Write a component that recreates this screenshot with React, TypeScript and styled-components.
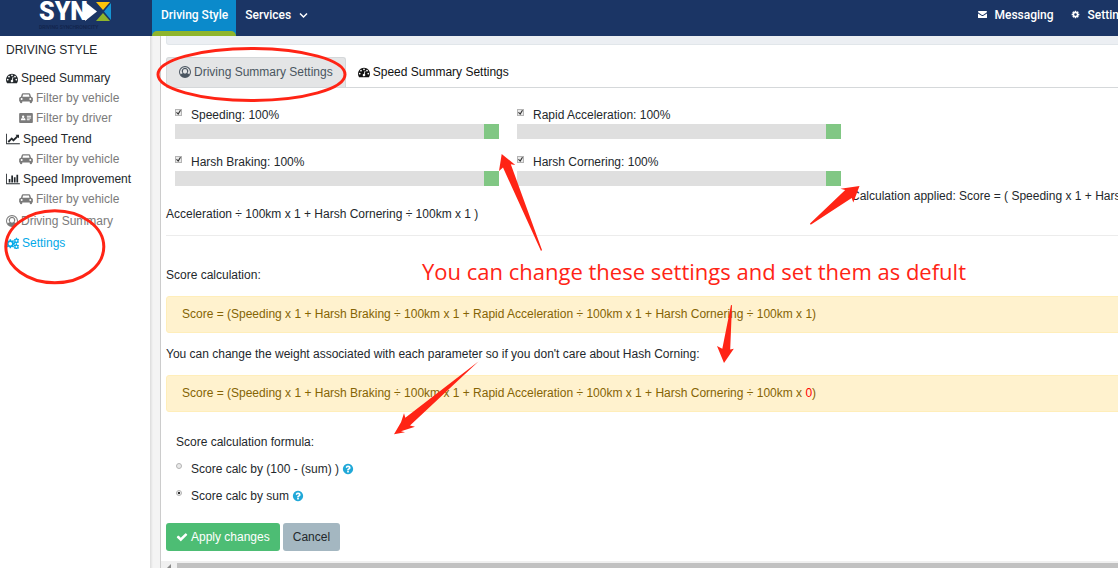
import React, { useState } from "react";
import styled, { createGlobalStyle } from "styled-components";

const Global = createGlobalStyle`
  * { box-sizing: border-box; }
  html, body { height: 100%; }
  body {
    margin: 0;
    overflow: hidden;
    background: #fff;
    color: #23282c;
    font: 12px/18px "Liberation Sans", Arial, sans-serif;
  }
  #root { height: 100%; }
  ul { margin: 0; padding: 0; list-style: none; }
`;

/* ---------- icons ---------- */

const ICONS = {
  gauge: { w: 1792, d: "M384 1152q0-53-37.5-90.5t-90.5-37.5-90.5 37.5-37.5 90.5 37.5 90.5 90.5 37.5 90.5-37.5 37.5-90.5zm192-448q0-53-37.5-90.5t-90.5-37.5-90.5 37.5-37.5 90.5 37.5 90.5 90.5 37.5 90.5-37.5 37.5-90.5zm428 481l101-382q6-26-7.5-48.5t-38.5-29.5-48 6.5-30 39.5l-101 382q-60 5-107 43.5t-63 98.5q-20 77 20 146t117 89 146-20 89-117q16-60-6-117t-72-91zm660-33q0-53-37.5-90.5t-90.5-37.5-90.5 37.5-37.5 90.5 37.5 90.5 90.5 37.5 90.5-37.5 37.5-90.5zm-640-640q0-53-37.5-90.5t-90.5-37.5-90.5 37.5-37.5 90.5 37.5 90.5 90.5 37.5 90.5-37.5 37.5-90.5zm448 192q0-53-37.5-90.5t-90.5-37.5-90.5 37.5-37.5 90.5 37.5 90.5 90.5 37.5 90.5-37.5 37.5-90.5zm320 448q0 261-141 483-19 29-54 29h-1402q-35 0-54-29-141-221-141-483 0-182 71-348t191-286 286-191 348-71 348 71 286 191 191 286 71 348z" },
  cog: { w: 1792, d: "M1152 896q0-106-75-181t-181-75-181 75-75 181 75 181 181 75 181-75 75-181zm512-109v222q0 12-8 23t-20 13l-185 28q-19 54-39 91 35 50 107 138 10 12 10 25t-9 23q-27 37-99 108t-94 71q-12 0-26-9l-138-108q-44 23-91 38-16 136-29 186-7 28-36 28h-222q-14 0-24.5-8.5t-11.5-21.5l-28-184q-49-16-90-37l-141 107q-10 9-25 9-14 0-25-11-126-114-165-168-7-10-7-23 0-12 8-23 15-21 51-66.5t54-70.5q-27-50-41-99l-183-27q-13-2-21-12.5t-8-23.5v-222q0-12 8-23t19-13l186-28q14-46 39-92-40-57-107-138-10-12-10-24 0-10 9-23 26-36 98.5-107.5t94.5-71.5q13 0 26 10l138 107q44-23 91-38 16-136 29-186 7-28 36-28h222q14 0 24.5 8.5t11.5 21.5l28 184q49 16 90 37l142-107q9-9 24-9 13 0 25 10 129 119 165 170 7 8 7 22 0 12-8 23-15 21-51 66.5t-54 70.5q26 50 41 98l183 28q13 2 21 12.5t8 23.5z" },
  check: { w: 1792, d: "M1671 566q0 40-28 68l-724 724-136 136q-28 28-68 28t-68-28l-136-136-362-362q-28-28-28-68t28-68l136-136q28-28 68-28t68 28l294 295 656-657q28-28 68-28t68 28l136 136q28 28 28 68z" },
  line: { w: 2048, d: "M2048 1536v128h-2048v-1536h128v1408h1920zm-128-1248v435q0 21-19.5 29.5t-35.5-7.5l-121-121-633 633q-10 10-23 10t-23-10l-233-233-416 416-192-192 585-585q10-10 23-10t23 10l233 233 464-464-121-121q-16-16-7.5-35.5t29.5-19.5h435q14 0 23 9t9 23z" },
  bars: { w: 2048, d: "M640 896v512h-256v-512h256zm384-512v1024h-256v-1024h256zm1024 1152v128h-2048v-1536h128v1408h1920zm-640-896v768h-256v-768h256zm384-384v1152h-256v-1152h256z" },
  help: { w: 1792, d: "M1024 1376v-192q0-14-9-23t-23-9h-192q-14 0-23 9t-9 23v192q0 14 9 23t23 9h192q14 0 23-9t9-23zm256-672q0-88-55.5-163t-138.5-116-170-41q-243 0-371 213-15 24 8 42l132 100q7 6 19 6 16 0 25-12 53-68 86-92 34-24 86-24 48 0 85.5 26t37.5 59q0 38-20 61t-68 45q-63 28-115.5 86.5t-52.5 125.5v36q0 14 9 23t23 9h192q14 0 23-9t9-23q0-19 21.5-49.5t54.5-49.5q32-18 49-28.5t46-35 44.5-48 28-60.5 12.5-81zm384 192q0 209-103 385.5t-279.5 279.5-385.5 103-385.5-103-279.5-279.5-103-385.5 103-385.5 279.5-279.5 385.5-103 385.5 103 279.5 279.5 103 385.5z" },
  user: { w: 1792, d: "M896 0a896 896 0 1 0 0 1792a896 896 0 1 0 0-1792zM896 150a746 746 0 0 1 640 1128c-60-110-150-178-290-198a470 470 0 1 0-700 0c-140 20-230 88-290 198a746 746 0 0 1 640-1128zM896 440a310 310 0 0 0-310 330c0 200 130 350 310 350s310-150 310-350a310 310 0 0 0-310-330z" },
  car: { w: 2048, d: "M270 704L400 300q38-130 170-130h908q132 0 170 130l130 404q190 20 270 210v450q0 44-44 44h-84v110a170 170 0 0 1-340 0v-110H468v110a170 170 0 0 1-340 0v-110H44q-44 0-44-44V914q80-190 270-210zM500 704h1048l-96-316q-8-24-30-24H626q-22 0-30 24zM380 910a146 146 0 1 0 0 292a146 146 0 1 0 0-292zM1668 910a146 146 0 1 0 0 292a146 146 0 1 0 0-292z" },
  card: { w: 2048, d: "M140 160h1768q140 0 140 140v1192q0 140-140 140H140Q0 1632 0 1492V300q0-140 140-140zM600 520a180 180 0 1 0 0 360a180 180 0 1 0 0-360zM256 1240h700q0-300-190-330q-160 110-330 0q-180 30-180 330zM1152 576v128h640V576zM1152 832v128h640V832zM1152 1088v128h420v-128z" },
  mail: { w: 1792, d: "M0 330q0-120 140-120h1512q140 0 140 120q0 130-150 230L1000 980q-104 72-208 0L150 560Q0 460 0 330zM0 680l720 470q176 120 352 0l720-470v790q0 130-140 130H140Q0 1600 0 1470z" },
  cogs: { w: 2048, d: "M570 300h220l34 190 130 56 160-110 150 150-110 160 56 130 190 34v210l-190 34-56 130 110 160-150 150-160-110-130 56-34 190H570l-34-190-130-56-160 110L96 1444l110-160-56-130-150-34V910l150-34 56-130L96 586l150-150 160 110 130-56zM680 740a276 276 0 1 0 0 552a276 276 0 1 0 0-552zM1560 50h160l30 120 150 90 120-36 28 190-90 90v130l90 90-80 150-120-36-98 90-30 120h-160l-30-120-110-80-130 30-60-150 90-90V514l-90-90 70-150 130 36 90-90zM1645 380a150 150 0 1 0 0 300a150 150 0 1 0 0-300zM1560 1030h160l30 110 110 70 120-30 68 140-88 100v130l88 90-70 150-120-36-108 80-30 110h-160l-30-110-110-80-120 36-70-150 90-90v-130l-90-100 70-140 120 30 100-70zM1645 1330a150 150 0 1 0 0 300a150 150 0 1 0 0-300z" },
};
type IconName = keyof typeof ICONS;

const Glyph = styled.svg<{ $size: number; $wide: number }>`
  flex: none;
  width: ${(p) => p.$wide}px;
  height: ${(p) => p.$size}px;
  fill: currentColor;
`;

function Icon({ name, size = 12, wide }: { name: IconName; size?: number; wide?: number }) {
  const { w, d } = ICONS[name];
  return (
    <Glyph $size={size} $wide={wide ?? (w > 1792 ? size + 2 : size)} viewBox={`0 0 ${w} 1792`} aria-hidden="true">
      <path d={d} fillRule="evenodd" />
    </Glyph>
  );
}

/* ---------- page frame ---------- */

const Page = styled.div`
  position: relative;
  display: flex;
  flex-direction: column;
  height: 100%;
  overflow: hidden;
`;

const TopBar = styled.header`
  display: flex;
  flex: none;
  height: 36px;
  background: #1b3565;
  color: #fff;
  font: 500 12px/18px Roboto, sans-serif;
`;

const Brand = styled.a`
  flex: none;
  width: 152px;
  padding-left: 38px;
`;

const LogoArt = styled.svg`
  display: block;
  overflow: visible;
`;

const NavLink = styled.a`
  display: flex;
  align-items: flex-start;
  gap: 8px;
  flex: none;
  padding: 6px 8px 0 9px;
  color: #fff;
  text-decoration: none;
  white-space: nowrap;
  & > svg { margin-top: 4px; }
`;

const ActiveTab = styled.div`
  display: flex;
  flex-direction: column;
  flex: none;
  background: #0b8acb;
  &::after {
    content: "";
    height: 5px;
    margin-top: auto;
    border-radius: 5px 5px 0 0;
    background: #8fb52c;
  }
`;

const NavRight = styled.nav`
  display: flex;
  flex: none;
  margin-left: auto;
  margin-right: -22px;
`;

const Body = styled.div`
  display: flex;
  flex: 1;
  min-height: 0;
`;

const Sidebar = styled.aside`
  flex: none;
  width: 150px;
  padding: 5px 6px;
`;

const SideTitle = styled.h2`
  margin: 0 0 9px;
  font-size: 12px;
  font-weight: 400;
  line-height: 18px;
`;

const SideGroup = styled.ul`
  & + & { margin-top: 1px; }
`;

const SideLink = styled.a<{ $sub?: boolean; $tone?: string; $tall?: boolean }>`
  display: flex;
  align-items: center;
  gap: 3px;
  height: ${(p) => (p.$tall ? 22 : 20)}px;
  padding-left: ${(p) => (p.$sub ? 13 : 0)}px;
  color: ${(p) => p.$tone ?? (p.$sub ? "#7b7b7b" : "#23282c")};
  text-decoration: none;
  white-space: nowrap;
`;

const Gutter = styled.div`
  flex: none;
  width: 11px;
  border-right: 1px solid #ccc;
  background: linear-gradient(to right, #dcdcdc, #f4f4f4 3px);
`;

const Pane = styled.div`
  display: flex;
  flex: 1;
  flex-direction: column;
  min-width: 0;
  overflow: hidden;
`;

const Content = styled.main`
  flex: 1;
  min-width: 1156px;
  padding: 0 0 0 5px;
`;

const Crumbs = styled.div`
  height: 9px;
  border: 1px solid #e1e6ea;
  border-top: 0;
  border-radius: 0 0 3px 3px;
  background: #eceff3;
`;

const Tabs = styled.div`
  display: flex;
  margin-top: 12px;
  border-bottom: 1px solid #d5d8da;
`;

const Tab = styled.button<{ $active?: boolean }>`
  display: flex;
  align-items: center;
  gap: 3px;
  height: 30px;
  padding: 0 12px 2px;
  border: 1px solid ${(p) => (p.$active ? "#d5d8da" : "transparent")};
  border-width: ${(p) => (p.$active ? "1px 1px 0" : "1px 0 0")};
  border-radius: 3px 3px 0 0;
  background: ${(p) => (p.$active ? "#e4e5e6" : "transparent")};
  color: ${(p) => (p.$active ? "#4a5560" : "#111")};
  font: inherit;
`;

/* ---------- weights ---------- */

const Weights = styled.section`
  padding-top: 18px;
`;

const SliderGrid = styled.div`
  display: inline-grid;
  grid-template-columns: 324px 324px;
  gap: 14px 18px;
  margin: 0 10px 0 9px;
  padding-bottom: 17px;
  vertical-align: text-bottom;
`;

const CheckLabel = styled.label`
  display: flex;
  align-items: flex-start;
  gap: 9px;
  height: 18px;
`;

const Tick = styled.input`
  appearance: none;
  flex: none;
  width: 7px;
  height: 7px;
  margin: 3px 0 0;
  border: 1px solid #b4b4b4;
  background: #e9e9e9;
  &[type="radio"] {
    width: 6px;
    height: 6px;
    border-radius: 50%;
  }
  &:checked::after {
    content: "";
    display: block;
    background: #333;
  }
  &[type="radio"]:checked::after {
    width: 2px;
    height: 2px;
    margin: 1px;
  }
  &[type="checkbox"]:checked::after {
    width: 5px;
    height: 5px;
    clip-path: polygon(0 50%, 20% 40%, 40% 65%, 80% 0, 100% 10%, 45% 100%);
  }
`;

const Range = styled.input`
  appearance: none;
  display: block;
  width: 100%;
  height: 15px;
  margin: 0;
  background: #dfdfdf;
  &::-webkit-slider-thumb {
    appearance: none;
    width: 15px;
    height: 15px;
    background: #81c784;
  }
`;

const Rule = styled.hr`
  height: 1px;
  margin: 12px 0 30px;
  border: 0;
  background: #ececec;
`;

const Note = styled.p`
  margin: 0 0 12px;
`;

const Alert = styled.div`
  margin-bottom: 12px;
  padding: 8px 15px 9px;
  border: 1px solid #ffeeba;
  border-radius: 3px;
  background: #fff2ce;
  color: #856404;
  line-height: 18px;
`;

const Zero = styled.span`
  color: #f00;
`;

const Choices = styled.fieldset`
  margin: 21px 0 0;
  padding: 0 0 0 10px;
  border: 0;
`;

const Legend = styled.legend`
  padding: 0;
  margin-bottom: 9px;
`;

const Choice = styled.div`
  display: flex;
  align-items: center;
  gap: 3px;
  margin-bottom: 9px;
  color: #20a8d8;
  & > label { color: #23282c; }
`;

const Actions = styled.div`
  display: flex;
  gap: 3px;
  margin-top: 9px;
`;

const Button = styled.button<{ $primary?: boolean }>`
  display: flex;
  align-items: center;
  gap: 3px;
  height: 28px;
  padding: 0 10px;
  border: 0;
  border-radius: 3px;
  background: ${(p) => (p.$primary ? "#4dbd74" : "#a4b7c1")};
  color: ${(p) => (p.$primary ? "#fff" : "#23282c")};
  font: inherit;
`;

const ScrollTrack = styled.div`
  display: flex;
  align-items: flex-end;
  gap: 6px;
  flex: none;
  height: 7px;
  padding-left: 6px;
  background: #f0f0f0;
`;

const ScrollThumb = styled.div`
  flex: 1;
  height: 5px;
  background: #c1c1c1;
`;

/* ---------- hand-drawn notes over the page ---------- */

const Marks = styled.svg`
  position: absolute;
  top: 0;
  left: 0;
  pointer-events: none;
`;

const Remark = styled.p`
  position: absolute;
  top: 256px;
  left: 422px;
  margin: 0;
  color: #ff2415;
  font: 22px/30px "Open Sans", sans-serif;
  white-space: nowrap;
`;

function Weight({ name }: { name: string }) {
  const [value, setValue] = useState(100);
  return (
    <div>
      <CheckLabel>
        <Tick type="checkbox" defaultChecked />
        <span>{name}: {value}%</span>
      </CheckLabel>
      <Range type="range" min={0} max={100} value={value} aria-label={name} onChange={(e) => setValue(Number(e.target.value))} />
    </div>
  );
}

function Side({ icon, wide, children, ...rest }: { icon: IconName; wide?: number; children: string; $sub?: boolean; $tone?: string; $tall?: boolean }) {
  return (
    <li>
      <SideLink href="#" {...rest}>
        <Icon name={icon} wide={wide} />
        {children}
      </SideLink>
    </li>
  );
}

function Logo() {
  return (
    <LogoArt width="74" height="34" viewBox="0 0 74 34" role="img" aria-label="SYNX">
      <text x="1" y="20" fontFamily="Roboto, sans-serif" fontWeight="900" fontSize="25" fill="#fff">SYN</text>
      <path d="M47 2l12 9.5-12 9.5z" fill="#fff" />
      <path d="M58 2h14l-7 8z" fill="#fdc50b" />
      <path d="M73 3v17l-7-8.5z" fill="#1695d3" />
      <path d="M58 21h14l-7-8z" fill="#8fb52c" />
      <text x="1" y="29" fontFamily="Roboto, sans-serif" fontSize="5" fill="#12234a">DRIVING SYNCHRONICITY</text>
    </LogoArt>
  );
}

export default function App() {
  return (
    <Page>
      <Global />
      <TopBar>
        <Brand href="#"><Logo /></Brand>
        <ActiveTab><NavLink href="#">Driving Style</NavLink></ActiveTab>
        <NavLink href="#">
          Services
          <svg width="9" height="10" viewBox="0 0 9 10" fill="none" stroke="currentColor" strokeWidth="1.5" aria-hidden="true">
            <path d="M1 3.5l3.5 3.5L8 3.5" />
          </svg>
        </NavLink>
        <NavRight>
          <NavLink href="#"><Icon name="mail" size={9} />Messaging</NavLink>
          <NavLink href="#"><Icon name="cog" size={9} />Settings</NavLink>
        </NavRight>
      </TopBar>
      <Body>
        <Sidebar>
          <SideTitle>DRIVING STYLE</SideTitle>
          <SideGroup>
            <Side icon="gauge">Speed Summary</Side>
            <Side icon="car" $sub>Filter by vehicle</Side>
            <Side icon="card" $sub>Filter by driver</Side>
          </SideGroup>
          <SideGroup>
            <Side icon="line">Speed Trend</Side>
            <Side icon="car" $sub>Filter by vehicle</Side>
            <Side icon="bars">Speed Improvement</Side>
            <Side icon="car" $sub>Filter by vehicle</Side>
          </SideGroup>
          <SideGroup>
            <Side icon="user" $tall $tone="#7b7b7b">Driving Summary</Side>
            <Side icon="cogs" wide={13} $tall $tone="#03a9e8">Settings</Side>
          </SideGroup>
        </Sidebar>
        <Gutter />
        <Pane>
          <Content>
            <Crumbs />
            <Tabs role="tablist">
              <Tab role="tab" aria-selected="true" $active><Icon name="user" />Driving Summary Settings</Tab>
              <Tab role="tab" aria-selected="false"><Icon name="gauge" />Speed Summary Settings</Tab>
            </Tabs>
            <Weights>
              <SliderGrid>
                <Weight name="Speeding" />
                <Weight name="Rapid Acceleration" />
                <Weight name="Harsh Braking" />
                <Weight name="Harsh Cornering" />
              </SliderGrid>
              Calculation applied: Score = ( Speeding x 1 + Harsh Braking ÷ 100km x 1 + Rapid Acceleration ÷ 100km x 1 + Harsh Cornering ÷ 100km x 1 )
            </Weights>
            <Rule />
            <Note>Score calculation:</Note>
            <Alert>Score = (Speeding x 1 + Harsh Braking ÷ 100km x 1 + Rapid Acceleration ÷ 100km x 1 + Harsh Cornering ÷ 100km x 1)</Alert>
            <Note>You can change the weight associated with each parameter so if you don't care about Hash Corning:</Note>
            <Alert>Score = (Speeding x 1 + Harsh Braking ÷ 100km x 1 + Rapid Acceleration ÷ 100km x 1 + Harsh Cornering ÷ 100km x <Zero>0</Zero>)</Alert>
            <Choices>
              <Legend>Score calculation formula:</Legend>
              <Choice>
                <CheckLabel><Tick type="radio" name="formula" />Score calc by (100 - (sum) )</CheckLabel>
                <Icon name="help" />
              </Choice>
              <Choice>
                <CheckLabel><Tick type="radio" name="formula" defaultChecked />Score calc by sum</CheckLabel>
                <Icon name="help" />
              </Choice>
            </Choices>
            <Actions>
              <Button $primary><Icon name="check" />Apply changes</Button>
              <Button>Cancel</Button>
            </Actions>
          </Content>
          <ScrollTrack>
            <svg width="4" height="4" viewBox="0 0 4 4" aria-hidden="true"><path d="M4 0v4H0z" fill="#8a8a8a" /></svg>
            <ScrollThumb />
          </ScrollTrack>
        </Pane>
      </Body>
      <Marks width="1118" height="568" viewBox="0 0 1118 568" aria-hidden="true">
        <g fill="none" stroke="#ff2415" strokeWidth="3">
          <ellipse cx="251.5" cy="74.5" rx="93.5" ry="26" />
          <ellipse cx="54.8" cy="246.8" rx="49" ry="36" />
        </g>
        <g fill="#ff2415">
          <path d="M501.7 154L515.3 165l-4.5-.8L542 250l-1 1L503 167.5l-4 3.5z" />
          <path d="M859.5 186l-19 2.7 4.7 1.3L810 223.5l.7 1.2L851.7 198l1.6 4.5z" />
          <path d="M731 305l-8.7 43.7L717 346l7 17 9.8-14.2-3.6.6L732 305.3z" />
          <path d="M478.7 361.3L405.3 417.7 404 413.3l-3 9-7 12 11-2-4-1 14-4.6-5-1.3z" />
        </g>
      </Marks>
      <Remark>You can change these settings and set them as defult</Remark>
    </Page>
  );
}
